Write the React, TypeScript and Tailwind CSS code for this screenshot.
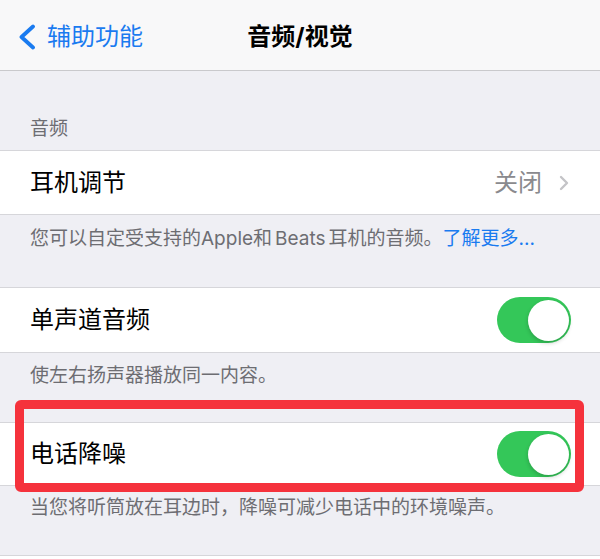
import React from "react";

const font = { fontFamily: 'Inter, "Noto Sans CJK SC", sans-serif' };

function Toggle() {
  return (
    <div className="flex h-[46px] w-[74px] items-center justify-end rounded-full bg-[#34c759] p-[2.5px]">
      <div className="h-[41px] w-[41px] rounded-full bg-white shadow-[0_2px_4px_rgba(0,0,0,0.2)]" />
    </div>
  );
}

export default function App() {
  return (
    <div className="relative h-[559px] w-[600px] overflow-hidden bg-[#efeff4]" style={font}>
      {/* Nav bar */}
      <div className="grid h-[71px] grid-cols-[1fr_auto_1fr] items-center border-b border-[#c9c9cc] bg-[#f8f8f9] pt-[4px]">
        <div className="flex items-center pl-[18px]">
          <svg width="18" height="26" viewBox="0 0 18 26">
            <path
              d="M15 2.5 L3.5 13 L15 23.5"
              fill="none"
              stroke="#1a7bf0"
              strokeWidth="3.8"
              strokeLinecap="round"
              strokeLinejoin="round"
            />
          </svg>
          <span className="ml-[11px] text-[24px] leading-none text-[#1a7bf0]">辅助功能</span>
        </div>
        <div className="text-[24px] font-bold leading-none text-black">音频/视觉</div>
        <div />
      </div>

      {/* Section header */}
      <div className="pl-[30px] pt-[47px] pb-[10px] text-[19px] leading-[22px] text-[#6d6d72]">音频</div>

      {/* Row 1 */}
      <div className="flex h-[65px] items-center justify-between border-y border-[#d6d6da] bg-white pl-[30px] pr-[31px]">
        <span className="text-[24px] leading-none text-black">耳机调节</span>
        <div className="flex items-center gap-[17px]">
          <span className="text-[24px] leading-none text-[#8a8a8e]">关闭</span>
          <svg width="10" height="16" viewBox="0 0 10 16">
            <path
              d="M2 2 L8 8 L2 14"
              fill="none"
              stroke="#c4c4c7"
              strokeWidth="2.4"
              strokeLinecap="round"
              strokeLinejoin="round"
            />
          </svg>
        </div>
      </div>
      <div className="pl-[30px] pt-[13px] pb-[37px] text-[19px] leading-[22px] text-[#6d6d72]">
        您可以自定受支持的Apple和<span className="mx-[3px]">Beats</span>耳机的音频。
        <span className="text-[#1a7bf0]">了解更多...</span>
      </div>

      {/* Row 2 */}
      <div className="flex h-[66px] items-center justify-between border-y border-[#d6d6da] bg-white pl-[30px] pr-[29px]">
        <span className="text-[24px] leading-none text-black">单声道音频</span>
        <Toggle />
      </div>
      <div className="pl-[30px] pt-[12px] pb-[35px] text-[19px] leading-[22px] text-[#6d6d72]">
        使左右扬声器播放同一内容。
      </div>

      {/* Row 3 */}
      <div className="flex h-[64px] items-center justify-between border-y border-[#d6d6da] bg-white pl-[30px] pr-[29px]">
        <span className="text-[24px] leading-none text-black">电话降噪</span>
        <Toggle />
      </div>
      <div className="pl-[30px] pt-[11px] pb-[36px] text-[19px] leading-[22px] text-[#6d6d72]">
        当您将听筒放在耳边时，降噪可减少电话中的环境噪声。
      </div>
      <div className="h-[10px] border-t border-[#d6d6da] bg-white" />

      {/* Red annotation box */}
      <div className="absolute left-[15px] top-[400px] h-[92px] w-[569px] rounded-[6px] border-[9px] border-[#f5323c]" />
    </div>
  );
}
